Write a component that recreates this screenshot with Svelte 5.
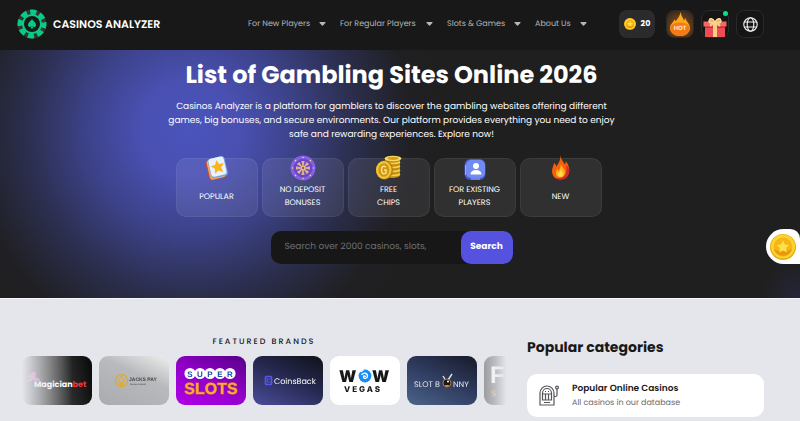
<script>
  const menu = ["For New Players", "For Regular Players", "Slots & Games", "About Us"];

  const filters = [
    { icon: "star", lines: ["POPULAR"] },
    { icon: "wheel", lines: ["NO DEPOSIT", "BONUSES"] },
    { icon: "coins", lines: ["FREE", "CHIPS"] },
    { icon: "user", lines: ["FOR EXISTING", "PLAYERS"] },
    { icon: "fire", lines: ["NEW"] },
  ];

  const spokes = [0, 45, 90, 135, 180, 225, 270, 315];

  let search = $state("");
</script>

{#snippet coin(size)}
  <svg width={size} height={size} viewBox="0 0 26 26" aria-hidden="true">
    <circle cx="13" cy="13" r="13" fill="#e8a80f" />
    <circle cx="13" cy="12.6" r="12" fill="#fbd52f" />
    <circle cx="13" cy="13" r="9.4" fill="#f5b516" />
    <path d="M4 15a9.4 9.4 0 0 0 18 0c-5 3-13 3-18 0z" fill="#e8990c" />
    <path d="M13 6.6l1.9 4 4.3.5-3.2 3 .9 4.3-3.9-2.2-3.9 2.2.9-4.3-3.2-3 4.3-.5z" fill="#fde14b" />
  </svg>
{/snippet}

{#snippet fire()}
  <path d="M12.500 0c.5 5 3 6.500 4.500 9.500.6-1 .8-2 .7-3.500 2.500 3 3.800 6.500 3.500 10-.4 5-3.700 8.500-8.700 8.500S4 21 4 16c0-3 1.500-5 2.200-8 1.200 1 1.800 2 2 3.500C11 8 12.500 5 12.500 0z" fill="#f4600c" />
  <path d="M21.200 15c.4 5.500-3.300 9.500-8.700 9.500-2 0-3.800-.5-5.200-1.500 7 .5 11.300-2.500 11.300-8.500 0-1.500-.2-3-.7-4.500 1.500 1 3 3 3.300 5z" fill="#d8282f" />
  <path d="M12.800 8.500c.5 3.500 4.200 5 4.200 9 0 3-1.900 5-4.600 5s-4.600-2-4.400-4.800c.1-1.500.8-2.300 1.100-3.700.8.5 1.200 1.200 1.400 2 1.500-2 2.500-4.500 2.300-7.500z" fill="#ffb21a" />
  <path d="M12.800 14c.2 2 2 3 2 5 0 1.700-1 2.700-2.400 2.700s-2.400-1-2.300-2.500C10.200 17.500 12.500 17 12.800 14z" fill="#ffdc50" />
{/snippet}

<header class="header">
  <a class="logo" href="/">
    <svg width="30" height="30" viewBox="0 0 30 30" aria-hidden="true">
      <circle cx="15" cy="15" r="14.500" fill="#343438" />
      <circle cx="15" cy="15" r="11.300" fill="none" stroke="#08cc82" stroke-width="6.400" stroke-dasharray="5.700 3.175" stroke-dashoffset="2" />
      <circle cx="15" cy="15" r="10" fill="#08cc82" />
      <circle cx="15" cy="15" r="8" fill="#17191b" />
      <path d="M15 10c1 2 4 3.400 4 6 0 2.100-2.400 2.600-3.400 1.300.1 1.100.4 1.600 1 2.200h-3.200c.6-.6.9-1.100 1-2.200-1 1.300-3.400.8-3.400-1.300 0-2.600 3-4 4-6z" fill="#08cc82" />
    </svg>
    <span>CASINOS ANALYZER</span>
  </a>

  <nav class="menu">
    {#each menu as item}
      <button class="menu-item">
        {item}
        <svg width="7" height="4" viewBox="0 0 7 4" aria-hidden="true"><path d="M1 0h5c.6 0 .8.5.4.9L4 3.500a.7.700 0 0 1-1 0L.6.9C.2.5.4 0 1 0z" fill="currentColor" /></svg>
      </button>
    {/each}
  </nav>

  <div class="actions">
    <button class="balance">{@render coin(12)} 20</button>
    <button class="action hot" aria-label="Hot offers">
      <svg width="26" height="26" viewBox="0 0 26 26">
        <path d="M13.500 1c.5 4 2.700 5.500 3.500 8.500l1.400-2.500c.6 3.500 4.600 5.500 4.600 10 0 4.700-4.500 8-10 8S3 21.700 3 17c0-4 3.200-5 4.200-8.500.8.500 1.300 1 1.600 2C10.500 7.500 13 5 13.500 1z" fill="#f9ab19" />
        <path d="M3.500 15c2-2.500 5.500-3.500 9.500-3.500s7.500 1 9.500 3.500c1.500 5-2.500 10-9.500 10S2 20 3.500 15z" fill="#f47a16" />
        <text x="13" y="19" text-anchor="middle" class="hot-text">HOT</text>
      </svg>
    </button>
    <button class="action gift" aria-label="Gifts">
      <svg width="24" height="20" viewBox="0 0 24 20">
        <path d="M2 7h20v13H2z" fill="#ec4d54" />
        <path d="M.5 4.500h23v5H.5z" fill="#f4686b" />
        <path d="M2 9.500h20V11H2z" fill="#bd313e" />
        <path d="M10 4.500h4V20h-4z" fill="#f9cf86" />
        <path d="M12 5C9 7 5.500 6 6 3.500S9.500.5 12 5c2.500-4.500 5.500-4 6-1.500S15 7 12 5z" fill="#f2b867" stroke="#ffe0a0" stroke-width="1.200" />
        <path d="M11 5L7 9M13 5l4 4" stroke="#f9cf86" stroke-width="2" />
      </svg>
      <i class="dot"></i>
    </button>
    <button class="action" aria-label="Language">
      <svg width="15" height="15" viewBox="0 0 15 15" fill="none" stroke="#f2f2f2" stroke-width="1.100">
        <circle cx="7.500" cy="7.500" r="6.700" />
        <ellipse cx="7.500" cy="7.500" rx="3.300" ry="6.700" />
        <path d="M1.300 5h12.400M1.300 10h12.400" />
      </svg>
    </button>
  </div>
</header>

<section class="hero">
  <h1>List of Gambling Sites Online 2026</h1>
  <p class="intro">
    Casinos Analyzer is a platform for gamblers to discover the gambling websites offering different<br />
    games, big bonuses, and secure environments. Our platform provides everything you need to enjoy<br />
    safe and rewarding experiences. Explore now!
  </p>

  <div class="filters">
    {#each filters as filter}
      <a class="filter" href="#{filter.icon}">
        <svg class="filter-icon" width="26" height="26" viewBox="0 0 26 26" aria-hidden="true">
          {#if filter.icon === "star"}
            <g transform="rotate(-13 13 13)">
              <rect x="3" y="4" width="17" height="20" rx="3" fill="#d9472f" />
              <rect x="4" y="3.500" width="16" height="20" rx="3" fill="#efab62" />
              <rect x="5.500" y="2.500" width="17" height="20" rx="3" fill="#75a7dd" />
              <rect x="6" y="2.500" width="15.500" height="18.500" rx="3" fill="#eaf1fc" />
              <path d="M14 5l2 4.500 4.800.5-3.600 3.300 1 4.900-4.200-2.500-4.200 2.500 1-4.900L7.200 10l4.800-.5z" fill="#f7b51e" />
            </g>
          {:else if filter.icon === "wheel"}
            <circle cx="13" cy="13" r="12.500" fill="#8560e4" />
            <circle cx="13" cy="13" r="9.300" fill="#6b45c8" />
            {#each spokes as angle}
              <g transform="rotate({angle} 13 13)">
                <path d="M13 13l-1.700-7h3.400z" fill="#d6b394" />
                <circle cx="13" cy="2.500" r=".8" fill="#f5cf8c" />
              </g>
            {/each}
            <circle cx="13" cy="13" r="2.600" fill="#f2c277" />
            <circle cx="13" cy="13" r="1.200" fill="#8c5b68" />
          {:else if filter.icon === "coins"}
            <path d="M9 3v17c0 4 15 4 15 0V3z" fill="#c38a13" />
            <path d="M9 7c3 2 12 2 15 0M9 11c3 2 12 2 15 0M9 15c3 2 12 2 15 0M9 19c3 2 12 2 15 0" fill="none" stroke="#f3d04c" stroke-width="1.600" />
            <ellipse cx="17" cy="3.500" rx="8.500" ry="2.800" fill="#f8dc62" />
            <ellipse cx="17" cy="3.500" rx="5.500" ry="1.400" fill="#d39c20" />
            <ellipse cx="8.500" cy="15" rx="8.500" ry="9.500" fill="#b77b0c" />
            <ellipse cx="7.800" cy="15" rx="7.800" ry="9" fill="#f2c535" />
            <ellipse cx="7.800" cy="15" rx="5.500" ry="6.700" fill="#ce951a" />
            <path d="M10 12c-3-2-4.500 0-4.500 3s1.500 5 4.500 3v-3H8" fill="none" stroke="#ffe678" stroke-width="1.500" />
          {:else if filter.icon === "user"}
            <rect x="2.500" y="4" width="21" height="21" rx="6" fill="#4a58cd" />
            <rect x="4" y="5" width="19" height="18" rx="5" fill="#718af4" />
            <path d="M3.500 10v10M9 24h9" stroke="#89a8ff" />
            <circle cx="14" cy="11" r="3" fill="#fff" />
            <path d="M8.500 19.500c0-3 2-4.500 5.500-4.500s5.500 1.500 5.500 4.500z" fill="#fff" />
          {:else}
            {@render fire()}
          {/if}
        </svg>
        {#each filter.lines as line}<span>{line}</span>{/each}
      </a>
    {/each}
  </div>

  <form class="search" onsubmit={(e) => e.preventDefault()}>
    <input type="text" aria-label="Search casinos" placeholder="Search over 2000 casinos, slots," bind:value={search} />
    <button>Search</button>
  </form>
</section>

<main class="content">
  <section class="brands">
    <h2>FEATURED BRANDS</h2>
    <div class="slider">
      <a class="brand magician" href="#magicianbet" aria-label="Magicianbet">
        <svg viewBox="0 0 70 49">
          <path d="M9 18c1-3 5-3 5 0l-1 3 4 2c2 1 1 3-2 2l-4-1-4 2c-2-1 0-3 2-4l-3-1c0-2 3-1 3-3z" fill="#d05bb8" />
          <text x="12" y="31" class="magician-name">Magician<tspan fill="#e9353f">bet</tspan></text>
        </svg>
      </a>
      <a class="brand jacks" href="#jackspay" aria-label="Jacks Pay">
        <svg viewBox="0 0 70 49">
          <circle cx="22.500" cy="24.500" r="6" fill="none" stroke="#e2a91c" stroke-width="1.200" />
          <path d="M22.500 20c0 2 3 3 3 5 0 1.500-2 2-2.600 1l.6 3h-2l.6-3c-.6 1-2.600.5-2.600-1 0-2 3-3 3-5z" fill="none" stroke="#e2a91c" />
          <text x="30" y="25" class="jacks-name">JACKS PAY</text>
          <text x="31" y="29" class="jacks-note">ONLINE CASINO</text>
        </svg>
      </a>
      <a class="brand super" href="#superslots" aria-label="Super Slots">
        <svg viewBox="0 0 70 49">
          {#each "SUPER" as letter, i}
            <circle cx={14 + i * 10} cy="17.500" r="5.600" fill="#fff" />
            <text x={14 + i * 10} y="20.500" text-anchor="middle" class="super-name">{letter}</text>
          {/each}
          <text x="35" y="38" text-anchor="middle" class="slots-name">SLOTS</text>
        </svg>
      </a>
      <a class="brand coinsback" href="#coinsback" aria-label="CoinsBack">
        <svg viewBox="0 0 70 49">
          <rect x="12.500" y="20.500" width="6" height="8" rx="1" fill="none" stroke="#5557ec" stroke-width="1.700" />
          <path d="M17.500 23h-3v3h3" fill="none" stroke="#5557ec" stroke-width="1.200" />
          <text x="21" y="28" class="coins-name">CoinsBack</text>
        </svg>
      </a>
      <a class="brand wow" href="#wowvegas" aria-label="Wow Vegas">
        <svg viewBox="0 0 70 49">
          <text x="9" y="26" class="wow-name">W</text>
          <text x="42" y="26" class="wow-name">W</text>
          <circle cx="35" cy="20" r="6.400" fill="#168cf4" />
          <path d="M31.500 19c2-3 6-2 6 1s-4 3-4 1 2-1 2 0M30.500 16l3-2" fill="none" stroke="#fff" stroke-width="1.300" />
          <text x="14" y="36" class="vegas-name">VEGAS</text>
        </svg>
      </a>
      <a class="brand bunny" href="#slotbunny" aria-label="Slot Bunny">
        <svg viewBox="0 0 70 49">
          <text x="7" y="31" class="bunny-name">SLOT B</text>
          <text x="46" y="31" class="bunny-name">NNY</text>
          <path d="M39 25l-3-5M41 24l4-6" stroke="#e1e1e1" stroke-width="1.400" />
          <circle cx="40" cy="27" r="4" fill="#17181b" stroke="#b57b32" />
          <path d="M37.500 29h5l-2.500 2z" fill="#d99a46" />
          <circle cx="41" cy="25.500" r="1" fill="#fff" />
        </svg>
      </a>
      <a class="brand fortune" href="#fortune" aria-label="Next brand">
        <svg viewBox="0 0 70 49">
          <text x="6" y="27" class="fortune-name">F</text>
          <text x="7" y="40" class="fortune-note">S</text>
        </svg>
      </a>
    </div>
  </section>

  <aside class="categories">
    <h2>Popular categories</h2>
    <a class="category" href="#casinos">
      <svg width="20" height="21" viewBox="0 0 20 21" fill="none" stroke="#55565a" stroke-width="1.200" aria-hidden="true">
        <path d="M1 20V8a7 7 0 0 1 14 0v12zM3.500 15V8a4.500 4.500 0 0 1 9 0v7z" />
        <path d="M3.500 9h9M6.500 9v6M9.500 9v6M5 17.500h6M6 6.500h1M9 6.500h1M15 11.500h1.500a1.500 1.500 0 0 0 1.500-1.500V4" />
        <circle cx="18" cy="2.500" r="1.400" />
      </svg>
      <span class="category-text">
        <strong>Popular Online Casinos</strong>
        <small>All casinos in our database</small>
      </span>
    </a>
  </aside>
</main>

<button class="bonus" aria-label="Daily bonus">{@render coin(26)}</button>

<style>
  :global(body) {
    margin: 0;
    background: #e5e6eb;
    font-family: Poppins, Inter, sans-serif;
    text-rendering: geometricPrecision;
  }

  :global(*) {
    box-sizing: border-box;
  }

  h1,
  h2,
  p {
    margin: 0;
  }

  a {
    color: inherit;
    text-decoration: none;
  }

  button,
  input {
    padding: 0;
    border: none;
    background: none;
    color: inherit;
    font-family: inherit;
    text-rendering: inherit;
  }

  button {
    cursor: pointer;
  }

  svg {
    display: block;
    flex: none;
  }

  .header {
    display: flex;
    align-items: center;
    height: 50px;
    padding: 0 36px 2px 17px;
    background: #181818;
    color: #fff;
  }

  .logo {
    display: flex;
    align-items: center;
    gap: 6px;
    font-size: 11px;
    font-weight: 600;
    white-space: nowrap;
  }

  .menu {
    display: grid;
    grid-template-columns: 78px 93px 74px 52px;
    gap: 14px;
    margin-left: auto;
  }

  .menu-item {
    display: flex;
    align-items: center;
    justify-content: space-between;
    color: #b5b5b7;
    font-size: 8px;
    white-space: nowrap;
  }

  .actions {
    display: flex;
    gap: 7px;
    margin-left: 32px;
  }

  .balance {
    display: flex;
    align-items: center;
    justify-content: center;
    gap: 5px;
    width: 36px;
    height: 28px;
    margin-right: 4px;
    border-radius: 8px;
    background: #2b2a2c;
    font-size: 8px;
    font-weight: 700;
  }

  .action {
    position: relative;
    display: flex;
    align-items: center;
    justify-content: center;
    width: 28px;
    height: 28px;
    border: 1px solid #2a2a2c;
    border-radius: 8px;
    background: #151515;
  }

  .hot {
    background: radial-gradient(circle at 50% 60%, #9b5317, #242020);
  }

  .gift {
    align-items: flex-end;
  }

  .hot-text {
    fill: #ffe1b0;
    font-size: 6px;
    font-weight: 700;
  }

  .dot {
    position: absolute;
    top: 0;
    right: 0;
    width: 5px;
    height: 5px;
    border-radius: 50%;
    background: #00e583;
  }

  .hero {
    display: flex;
    flex-direction: column;
    align-items: center;
    padding: 10px 17px 34px 0;
    background:
      radial-gradient(circle at 100% 100%, #24263a, transparent 40px),
      radial-gradient(circle at 190px 80px, #4b54bd 0, #4950b1 50px, #3c4288 105px, #2b2e4d 165px, #202024 220px, #1f1f1f 260px);
    color: #fff;
  }

  h1 {
    font-size: 24px;
    line-height: 32px;
    white-space: nowrap;
  }

  .intro {
    margin-top: 8px;
    font-size: 9px;
    line-height: 14px;
    text-align: center;
    white-space: nowrap;
  }

  .filters {
    display: flex;
    gap: 4px;
    margin: 16px 6px 14px 0;
  }

  .filter {
    position: relative;
    display: flex;
    flex-direction: column;
    align-items: center;
    justify-content: center;
    width: 82px;
    height: 59px;
    padding-top: 17px;
    border: 1px solid rgba(255, 255, 255, 0.06);
    border-radius: 10px;
    background: rgba(255, 255, 255, 0.08);
    font-size: 8px;
    line-height: 13px;
  }

  .filter-icon {
    position: absolute;
    top: -4px;
    left: 27px;
  }

  .search {
    display: flex;
    width: 242px;
    height: 33px;
    border-radius: 10px;
    background: #171717;
  }

  .search input {
    flex: 1;
    min-width: 0;
    padding-left: 14px;
    outline: none;
    font-size: 9px;
  }

  .search input::placeholder {
    color: #707075;
  }

  .search button {
    width: 52px;
    border-radius: 10px;
    background: #5552df;
    font-size: 9px;
    font-weight: 700;
  }

  .content {
    display: grid;
    grid-template-columns: minmax(0, 1fr) 237px;
    gap: 21px;
    padding: 36px 36px 4px 22px;
    border-top: 1px solid #f7f7f9;
    color: #191919;
  }

  .brands h2 {
    font-size: 8px;
    font-weight: 500;
    line-height: 14px;
    letter-spacing: 2px;
    text-align: center;
  }

  .slider {
    display: flex;
    gap: 7px;
    margin-top: 7px;
    overflow: hidden;
    mask-image: linear-gradient(90deg, transparent, #000 50px, #000 calc(100% - 28px), transparent);
  }

  .brand {
    flex: none;
    width: 70px;
    height: 49px;
    border-radius: 9px;
    overflow: hidden;
  }

  .magician {
    background: linear-gradient(80deg, #555, #303030 60%, #080808);
  }

  .magician-name {
    fill: #fff;
    font-size: 8px;
    font-weight: 700;
  }

  .jacks {
    background: linear-gradient(25deg, #aaaab0, #b9babd 60%, #eee);
  }

  .jacks-name {
    fill: #444549;
    font-family: "Liberation Sans", sans-serif;
    font-size: 5px;
    font-weight: 700;
  }

  .jacks-note {
    fill: #555;
    font-family: "Liberation Sans", sans-serif;
    font-size: 2px;
    font-weight: 700;
  }

  .super {
    background: linear-gradient(25deg, #b000e9, #9200ca 50%, #570087);
  }

  .super-name {
    fill: #244caa;
    font-family: "Liberation Sans", sans-serif;
    font-size: 8px;
    font-weight: 700;
  }

  .slots-name {
    fill: #faa942;
    stroke: #c75d2c;
    stroke-width: 1px;
    paint-order: stroke;
    font-family: "Liberation Sans", sans-serif;
    font-size: 16px;
    font-weight: 700;
  }

  .coinsback {
    background: linear-gradient(25deg, #4a4d9b, #25284e 55%, #101218);
  }

  .coins-name {
    fill: #fff;
    font-size: 8px;
  }

  .wow {
    background: #fff;
  }

  .wow-name {
    fill: #171717;
    font-family: Inter, sans-serif;
    font-size: 16px;
    font-weight: 900;
  }

  .vegas-name {
    fill: #171717;
    font-family: Inter, sans-serif;
    font-size: 8px;
    font-weight: 800;
    letter-spacing: 2px;
  }

  .bunny {
    background: linear-gradient(25deg, #4b6389, #303d61 50%, #171a28);
  }

  .bunny-name {
    fill: #e4e7eb;
    font-size: 8px;
  }

  .fortune {
    background: linear-gradient(90deg, #89898c, #444);
  }

  .fortune-name {
    fill: #fff;
    font-family: "Liberation Sans", sans-serif;
    font-size: 24px;
    font-weight: 700;
  }

  .fortune-note {
    fill: #ffbd35;
    font-family: "Liberation Sans", sans-serif;
    font-size: 8px;
  }

  .categories h2 {
    margin-top: 2px;
    font-size: 14px;
    font-weight: 700;
    line-height: 20px;
  }

  .category {
    display: flex;
    align-items: center;
    gap: 13px;
    height: 43px;
    margin-top: 17px;
    padding: 0 12px;
    border-radius: 10px;
    background: #fff;
  }

  .category-text {
    display: flex;
    flex-direction: column;
    line-height: 14px;
    white-space: nowrap;
  }

  .category-text strong {
    font-size: 9px;
    font-weight: 600;
  }

  .category-text small {
    color: #68696f;
    font-size: 8px;
  }

  .bonus {
    position: fixed;
    top: 229px;
    right: 0;
    display: flex;
    align-items: center;
    justify-content: center;
    width: 34px;
    height: 35px;
    border-radius: 18px 10px 0 18px;
    background: #fff;
  }
</style>
